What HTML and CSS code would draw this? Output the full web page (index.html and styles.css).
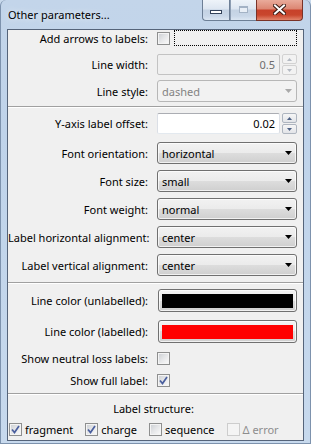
FILE: index.html
```html
<!DOCTYPE html>
<html>
<head>
<meta charset="utf-8">
<title>Other parameters...</title>
<link rel="stylesheet" href="styles.css">
</head>
<body>
<div class="window">
  <div class="titlebar">
    <span class="title">Other parameters...</span>
    <div class="caption">
      <div class="capbtn min"><span class="glyph-min"></span></div>
      <div class="capbtn max"><span class="glyph-max"></span></div>
      <div class="capbtn close">
        <svg width="13" height="11" viewBox="0 0 13 11"><path d="M2 1.5 L11 9.5 M11 1.5 L2 9.5" stroke="#3c1b14" stroke-width="4" stroke-linecap="square" fill="none"/><path d="M2 1.5 L11 9.5 M11 1.5 L2 9.5" stroke="#fff" stroke-width="2" stroke-linecap="square" fill="none"/></svg>
      </div>
    </div>
  </div>
  <div class="client">
    <div class="row r-arrows">
      <span class="lbl">Add arrows to labels:</span>
      <div class="ctl"><span class="cb"></span><span class="focusrect"></span></div>
    </div>
    <div class="row r-spin1">
      <span class="lbl">Line width:</span>
      <div class="spin is-disabled">
        <div class="spin-input">0.5</div>
        <div class="spin-btns">
          <div class="sb"><svg width="5" height="3" viewBox="0 0 5 3"><polygon points="2.5,0 5,3 0,3"/></svg></div>
          <div class="sb"><svg width="5" height="3" viewBox="0 0 5 3"><polygon points="0,0 5,0 2.5,3"/></svg></div>
        </div>
      </div>
    </div>
    <div class="row r-combo-first1">
      <span class="lbl">Line style:</span>
      <div class="combo is-disabled"><span>dashed</span><svg width="7" height="4" viewBox="0 0 7 4"><polygon points="0,0 7,0 3.5,4"/></svg></div>
    </div>
    <div class="sep sep1"></div>

    <div class="row r-spin2">
      <span class="lbl">Y-axis label offset:</span>
      <div class="spin">
        <div class="spin-input">0.02</div>
        <div class="spin-btns">
          <div class="sb"><svg width="5" height="3" viewBox="0 0 5 3"><polygon points="2.5,0 5,3 0,3"/></svg></div>
          <div class="sb"><svg width="5" height="3" viewBox="0 0 5 3"><polygon points="0,0 5,0 2.5,3"/></svg></div>
        </div>
      </div>
    </div>
    <div class="row r-combo r-combo-first2">
      <span class="lbl">Font orientation:</span>
      <div class="combo"><span>horizontal</span><svg width="7" height="4" viewBox="0 0 7 4"><polygon points="0,0 7,0 3.5,4"/></svg></div>
    </div>
    <div class="row r-combo">
      <span class="lbl">Font size:</span>
      <div class="combo"><span>small</span><svg width="7" height="4" viewBox="0 0 7 4"><polygon points="0,0 7,0 3.5,4"/></svg></div>
    </div>
    <div class="row r-combo">
      <span class="lbl">Font weight:</span>
      <div class="combo"><span>normal</span><svg width="7" height="4" viewBox="0 0 7 4"><polygon points="0,0 7,0 3.5,4"/></svg></div>
    </div>
    <div class="row r-combo">
      <span class="lbl">Label horizontal alignment:</span>
      <div class="combo"><span>center</span><svg width="7" height="4" viewBox="0 0 7 4"><polygon points="0,0 7,0 3.5,4"/></svg></div>
    </div>
    <div class="row r-combo">
      <span class="lbl">Label vertical alignment:</span>
      <div class="combo"><span>center</span><svg width="7" height="4" viewBox="0 0 7 4"><polygon points="0,0 7,0 3.5,4"/></svg></div>
    </div>
    <div class="sep sep2"></div>

    <div class="row r-color1">
      <span class="lbl">Line color (unlabelled):</span>
      <div class="colorbtn"><span class="swatch swatch-black"></span></div>
    </div>
    <div class="row r-color2">
      <span class="lbl">Line color (labelled):</span>
      <div class="colorbtn"><span class="swatch swatch-red"></span></div>
    </div>
    <div class="row r-check1">
      <span class="lbl">Show neutral loss labels:</span>
      <div class="ctl"><span class="cb"></span></div>
    </div>
    <div class="row r-check2">
      <span class="lbl">Show full label:</span>
      <div class="ctl"><span class="cb is-checked"><svg width="13" height="13" viewBox="0 0 13 13"><path d="M3 6.5 L5.5 9.5 L10 3" stroke="#4a5f9e" stroke-width="1.7" fill="none"/></svg></span></div>
    </div>
    <div class="sep sep3"></div>

    <div class="struct-title">Label structure:</div>
    <div class="struct-row">
      <span class="opt"><span class="cb is-checked"><svg width="13" height="13" viewBox="0 0 13 13"><path d="M3 6.5 L5.5 9.5 L10 3" stroke="#4a5f9e" stroke-width="1.7" fill="none"/></svg></span>fragment</span>
      <span class="opt"><span class="cb is-checked"><svg width="13" height="13" viewBox="0 0 13 13"><path d="M3 6.5 L5.5 9.5 L10 3" stroke="#4a5f9e" stroke-width="1.7" fill="none"/></svg></span>charge</span>
      <span class="opt"><span class="cb"></span>sequence</span>
      <span class="opt is-disabled"><span class="cb"></span>Δ error</span>
    </div>
  </div>
</div>
</body>
</html>
```
FILE: styles.css
```css
* { box-sizing: border-box; }
html, body { margin: 0; padding: 0; }
body {
  width: 311px;
  height: 444px;
  overflow: hidden;
  font-family: "Noto Sans", "Open Sans", sans-serif;
  font-size: 11px;
  color: #000;
  background: #c8d9ec;
}
.window {
  width: 311px;
  height: 444px;
  display: flex;
  flex-direction: column;
  padding: 0 6px 2px;
  background: linear-gradient(to bottom, #c3d5ea 0, #bfd3ea 30%, #c7d9ed 100%);
  border: 1px solid #7d92ad;
  border-top: none;
  border-radius: 6px 6px 0 0;
}
.titlebar {
  height: 29px;
  display: flex;
  justify-content: space-between;
  align-items: flex-start;
}
.title {
  margin-left: 1px;
  margin-top: 7px;
  line-height: 15px;
  color: #000;
  text-shadow: 0 0 6px rgba(255,255,255,.9);
}
.caption {
  display: flex;
  height: 21px;
  margin-right: 1px;
}
.capbtn {
  height: 21px;
  display: flex;
  align-items: center;
  justify-content: center;
  border: 1px solid #6d7f96;
  border-top: none;
}
.capbtn.min {
  width: 27px;
  border-right: none;
  border-radius: 0 0 0 4px;
  background: linear-gradient(to bottom, #eef3f9 0, #dde6f1 45%, #c4d2e3 50%, #c9d7e8 80%, #dbe6f2 100%);
}
.capbtn.max {
  width: 27px;
  border-right: none;
  background: linear-gradient(to bottom, #eef3f9 0, #dde6f1 45%, #c4d2e3 50%, #c9d7e8 80%, #dbe6f2 100%);
  box-shadow: inset 1px 0 0 #8d9db2;
}
.capbtn.close {
  width: 47px;
  border-color: #7a3328;
  border-radius: 0 0 4px 0;
  background: linear-gradient(to bottom, #e9ab9b 0, #dc8672 45%, #c7412a 50%, #c9462d 75%, #e2846b 100%);
}
.glyph-min {
  width: 12px;
  height: 4px;
  margin-top: 4px;
  background: #fff;
  border: 1px solid #33425a;
}
.glyph-max {
  width: 9px;
  height: 7px;
  margin-top: -2px;
  border: 1px solid #a3b2c5;
  border-top-width: 2px;
  background: #e8eef6;
}
.capbtn.close svg { margin-top: -1px; }

.client {
  flex: 1;
  border: 1px solid #55647a;
  background: #f0f0f0;
  display: flex;
  flex-direction: column;
}

.row {
  display: grid;
  grid-template-columns: 140px 140px;
  column-gap: 9px;
  align-items: center;
}
.lbl {
  text-align: right;
  white-space: nowrap;
  line-height: 15px;
}
.ctl {
  display: flex;
  align-items: center;
  height: 100%;
}

.r-arrows { height: 16px; }
.r-spin1 { height: 21px; margin-top: 8px; }
.r-combo-first1 { height: 22px; margin-top: 5px; }
.r-spin2 { height: 21px; margin-top: 5px; }
.r-combo { height: 22px; margin-top: 6px; }
.r-combo.r-combo-first2 { margin-top: 8px; }
.r-color1 { height: 23px; margin-top: 5px; }
.r-color2 { height: 23px; margin-top: 8px; }
.r-check1 { height: 15px; margin-top: 8px; }
.r-check2 { height: 15px; margin-top: 7px; }

.sep {
  height: 2px;
  border-top: 1px solid #a0a0a0;
  border-bottom: 1px solid #fff;
}
.sep1 { margin-top: 4px; }
.sep2 { margin-top: 6px; }
.sep3 { margin-top: 5px; }

/* checkbox */
.cb {
  position: relative;
  flex: none;
  width: 13px;
  height: 13px;
  border: 1px solid #8e8f8f;
  background: #f4f4f4;
}
.cb::before {
  content: "";
  position: absolute;
  left: 1px; top: 1px; right: 1px; bottom: 1px;
  background: linear-gradient(135deg, #cfd2d6 0, #e6e7e9 50%, #f8f8f8 100%);
}
.cb svg {
  position: absolute;
  left: -1px;
  top: -1px;
}
.focusrect {
  flex: 1;
  height: 16px;
  margin-left: 4px;
  border: 1px dotted #000;
}

/* spin box */
.spin {
  display: flex;
  gap: 2px;
  height: 21px;
}
.spin-input {
  width: 123px;
  height: 21px;
  border: 1px solid #dbdfe6;
  border-top-color: #abadb3;
  border-bottom-color: #e3e9ef;
  border-radius: 2px;
  background: #fff;
  text-align: right;
  padding-right: 4px;
  line-height: 19px;
}
.spin-btns {
  width: 15px;
  display: flex;
  flex-direction: column;
  gap: 1px;
}
.sb {
  flex: 1;
  display: flex;
  align-items: center;
  justify-content: center;
  border: 1px solid #aeb5bf;
  border-radius: 2px;
  background: linear-gradient(to bottom, #f6f6f6, #e2e4e8);
}
.sb svg { fill: #4d6185; }
.spin.is-disabled .spin-input {
  background: #f0f0f0;
  border-color: #c3c3c3;
  color: #6d6d6d;
}
.spin.is-disabled .sb {
  border-color: #d2d2d2;
  background: #f2f2f2;
}
.spin.is-disabled .sb svg { fill: #b3b9c2; }

/* combo */
.combo {
  height: 22px;
  display: flex;
  align-items: center;
  justify-content: space-between;
  padding: 0 4px 0 4px;
  border: 1px solid #707070;
  border-radius: 3px;
  background: linear-gradient(to bottom, #f2f2f2 0, #ebebeb 50%, #dddddd 50%, #cfcfcf 100%);
  box-shadow: inset 0 0 0 1px rgba(255,255,255,.7);
}
.combo span { line-height: 15px; padding-top: 1px; }
.combo svg { fill: #000; }
.combo.is-disabled {
  border-color: #b7b7b7;
  background: #f2f2f2;
  box-shadow: none;
  color: #838383;
}
.combo.is-disabled svg { fill: #a9a9a9; }

/* colour buttons */
.colorbtn {
  height: 23px;
  padding: 4px 3px 3px;
  margin-left: 1px;
  border: 1px solid #707070;
  border-radius: 3px;
  background: linear-gradient(to bottom, #f2f2f2 0, #ebebeb 50%, #dddddd 50%, #cfcfcf 100%);
  box-shadow: inset 0 0 0 1px rgba(255,255,255,.7);
  display: flex;
}
.swatch { flex: 1; }
.swatch-black { background: #000; }
.swatch-red { background: #ff0000; }

/* label structure */
.struct-title {
  margin-top: 6px;
  height: 15px;
  line-height: 15px;
  text-align: center;
  padding-right: 4px;
}
.struct-row {
  margin-top: 6px;
  height: 15px;
  display: flex;
  align-items: center;
  gap: 12px;
  padding-left: 1px;
}
.opt {
  display: flex;
  align-items: center;
  gap: 3px;
  line-height: 15px;
}
.opt.is-disabled { color: #8d8d8d; }
.opt.is-disabled .cb { border-color: #cdcdcd; }
.opt.is-disabled .cb::before { background: #f4f4f4; }
```
